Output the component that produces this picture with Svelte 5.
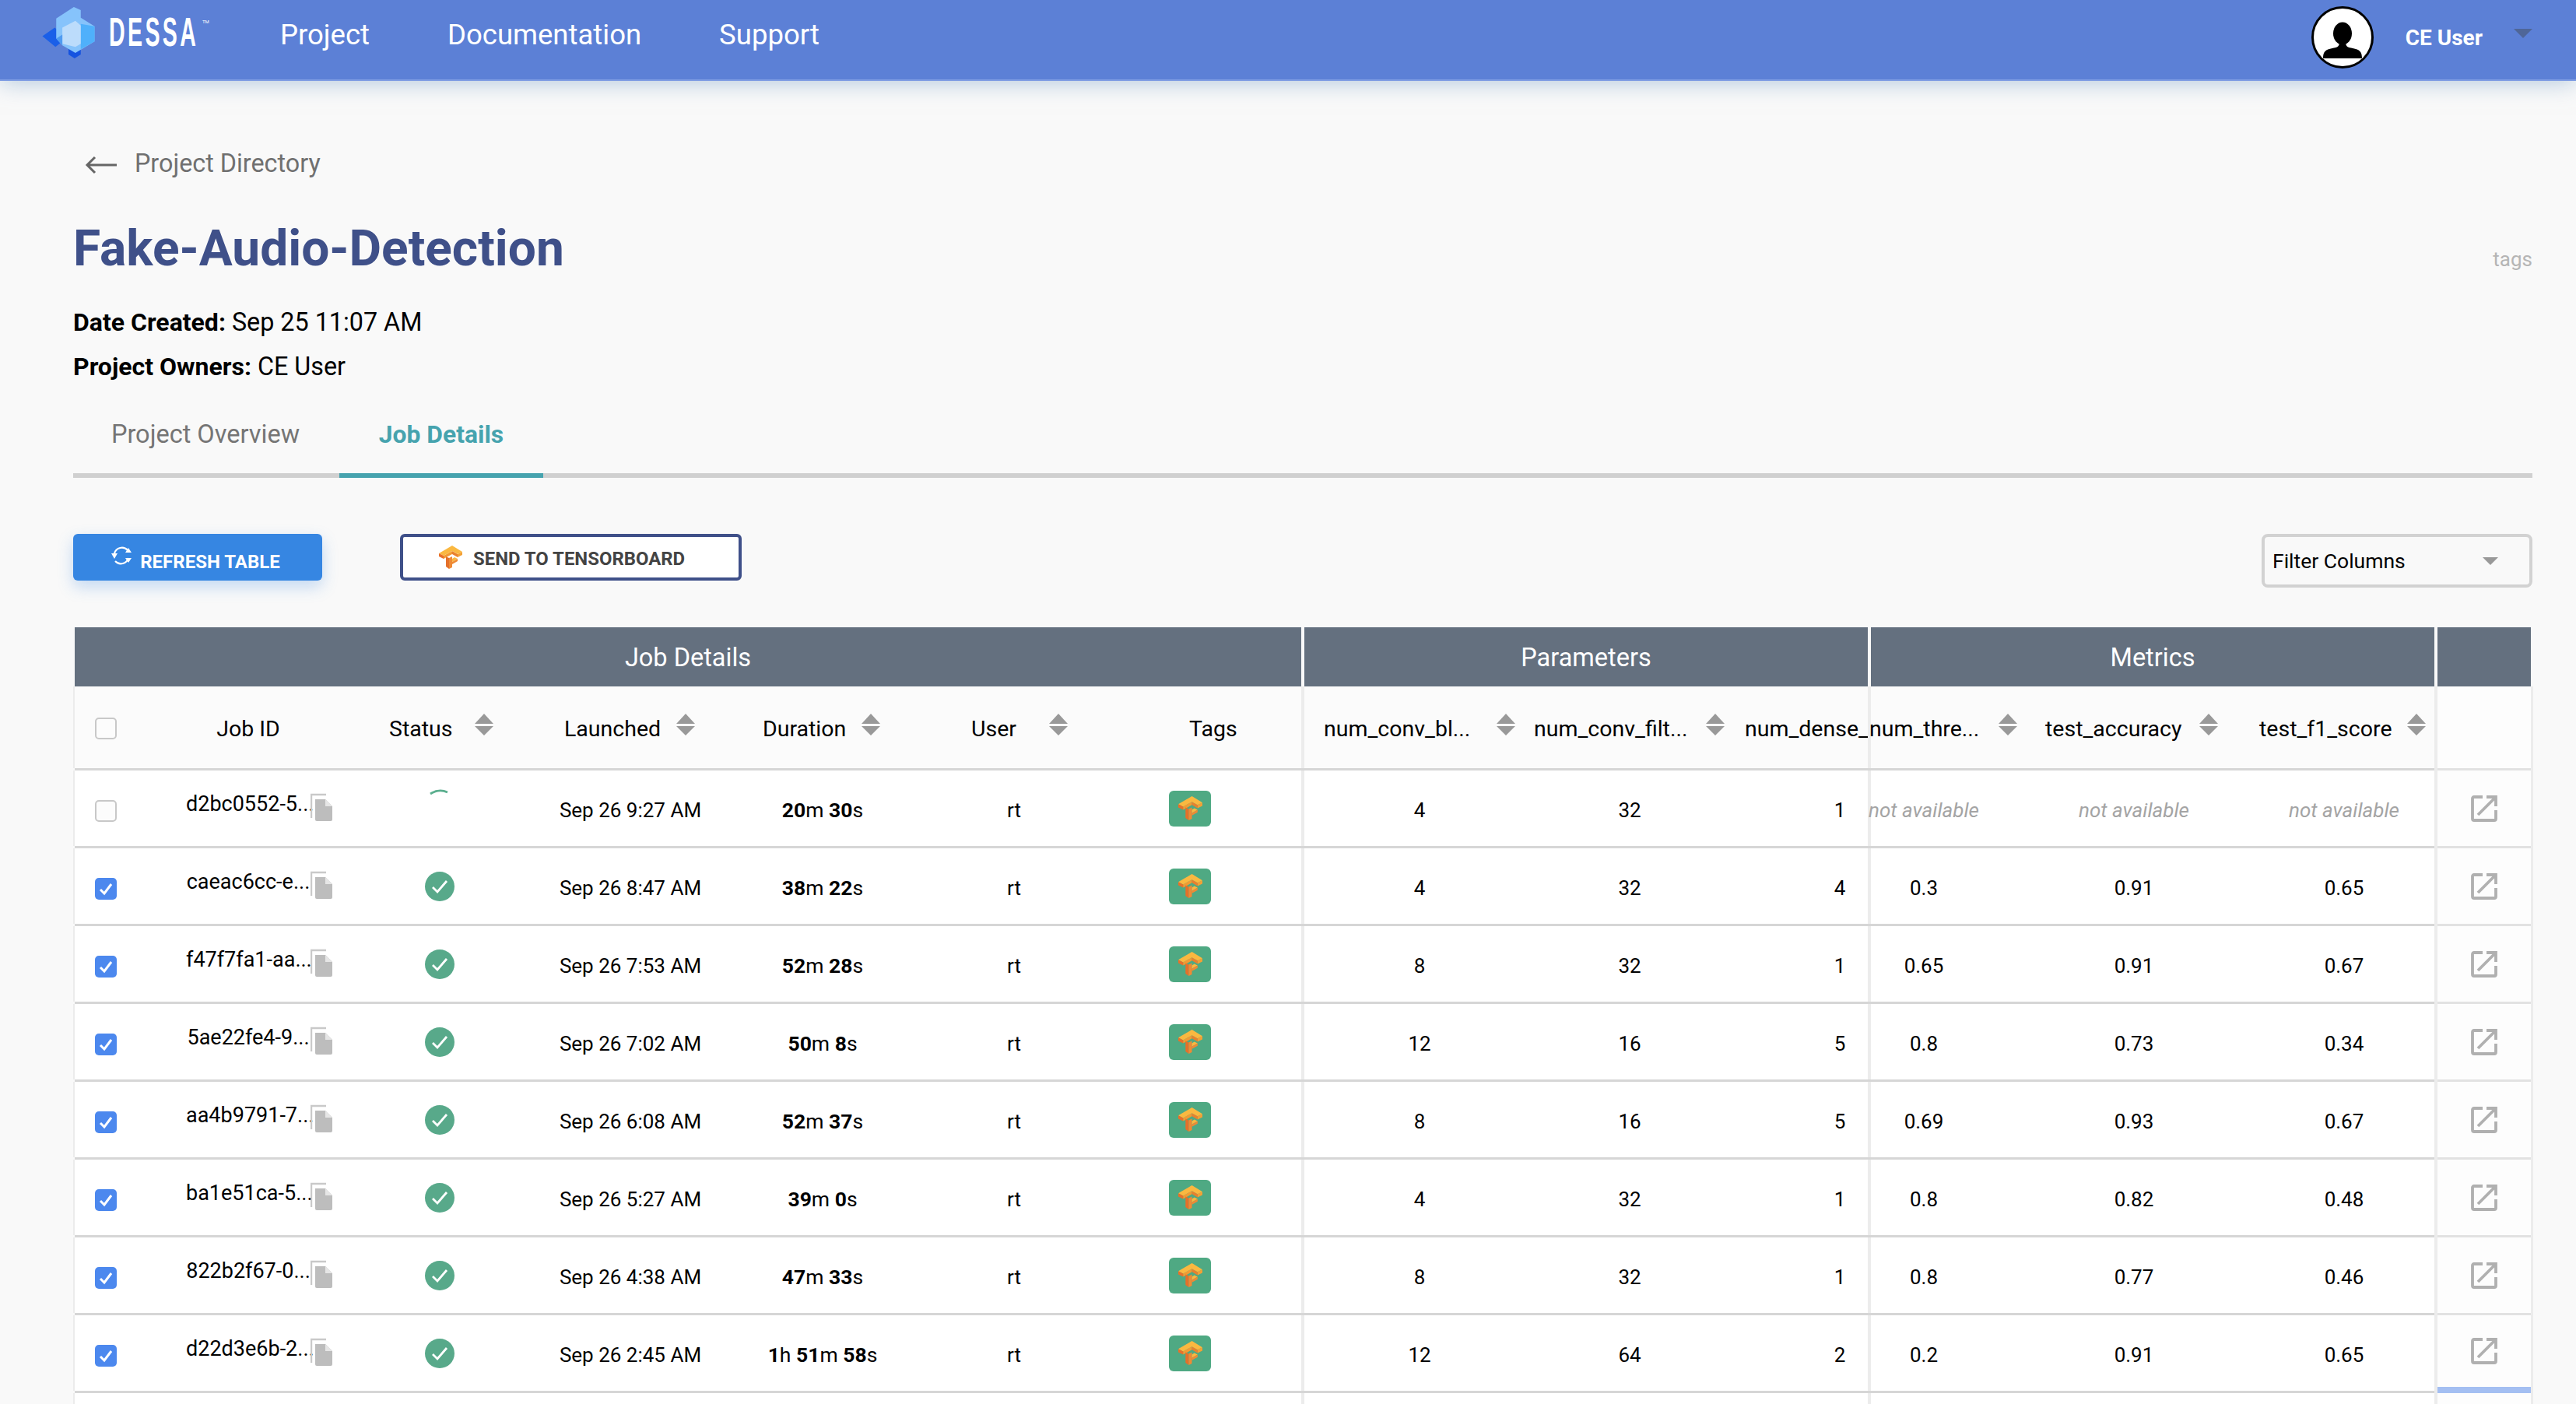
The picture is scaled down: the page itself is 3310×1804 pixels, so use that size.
<script>
  const rows = [
    { id: 'd2bc0552-5...', run: true, launched: 'Sep 26 9:27 AM', dur: [['20','m'],['30','s']], p: [4, 32, 1], m: null },
    { id: 'caeac6cc-e...', launched: 'Sep 26 8:47 AM', dur: [['38','m'],['22','s']], p: [4, 32, 4], m: ['0.3', '0.91', '0.65'] },
    { id: 'f47f7fa1-aa...', launched: 'Sep 26 7:53 AM', dur: [['52','m'],['28','s']], p: [8, 32, 1], m: ['0.65', '0.91', '0.67'] },
    { id: '5ae22fe4-9...', launched: 'Sep 26 7:02 AM', dur: [['50','m'],['8','s']], p: [12, 16, 5], m: ['0.8', '0.73', '0.34'] },
    { id: 'aa4b9791-7...', launched: 'Sep 26 6:08 AM', dur: [['52','m'],['37','s']], p: [8, 16, 5], m: ['0.69', '0.93', '0.67'] },
    { id: 'ba1e51ca-5...', launched: 'Sep 26 5:27 AM', dur: [['39','m'],['0','s']], p: [4, 32, 1], m: ['0.8', '0.82', '0.48'] },
    { id: '822b2f67-0...', launched: 'Sep 26 4:38 AM', dur: [['47','m'],['33','s']], p: [8, 32, 1], m: ['0.8', '0.77', '0.46'] },
    { id: 'd22d3e6b-2...', launched: 'Sep 26 2:45 AM', dur: [['1','h'],['51','m'],['58','s']], p: [12, 64, 2], m: ['0.2', '0.91', '0.65'] }
  ];
</script>

{#snippet sort()}
  <svg class="sort" viewBox="0 0 24 28" aria-hidden="true"><path d="M12 0 24 13H0z" fill="#999"/><path d="M0 16h24L12 28z" fill="#999"/></svg>
{/snippet}

{#snippet tf(cls)}
  <svg class={cls} viewBox="0 0 30 30" aria-hidden="true">
    <path d="M6 13 17 7 17 11 6 17z" fill="#f29a33"/>
    <path d="M24 11 30 8 30 12 24 15z" fill="#f3a035"/>
    <path d="M17 7 24 11 24 15 17 11z" fill="#e8802e"/>
    <path d="M0 10 17 0 30 8 24 11 17 7 6 13z" fill="#fab840"/>
    <path d="M0 10 6 13 6 17 0 14z" fill="#e8702a"/>
    <path d="M9 14 13 16 13 30 9 27z" fill="#e4702a"/>
    <path d="M13 16 17 14 17 28 13 30z" fill="#ee8a35"/>
    <path d="M17 17 20 15 24 17 17 21z" fill="#fab840"/>
    <path d="M17 21 24 17 24 20 17 24z" fill="#ee8a35"/>
  </svg>
{/snippet}

{#snippet openIcon()}
  <svg class="open" viewBox="0 0 34 34" aria-hidden="true">
    <path d="M15 2H4Q2 2 2 4V30Q2 32 4 32H30Q32 32 32 30V19" fill="none" stroke="#b0b0b0" stroke-width="3.800"/>
    <path d="M9 25 31 3M20 2H32V14" fill="none" stroke="#b0b0b0" stroke-width="3.800"/>
  </svg>
{/snippet}

<div class="page">
  <header class="nav">
    <div class="logo">
      <svg class="mark" viewBox="0 0 68 67" aria-hidden="true">
        <path d="M0 38 16 27 26 35 26 45 17 52z" fill="#1a5fe8"/>
        <path d="M34 55 43 50 50 55 50 62 42 67 34 62z" fill="#1553e0"/>
        <path d="M18 15 41 0 50 4 50 14 68 25 68 45 43 60 26 50 18 41z" fill="#86c3fb"/>
        <path d="M50 22 68 25 68 45 50 55z" fill="#4fb0fb"/>
        <path d="M26 27 43 18 50 24 50 48 43 52 26 48z" fill="#bcdcfb"/>
        <path d="M18 41 26 36 26 50z" fill="#4f9bf1"/>
      </svg>
      <span class="wordmark">DESSA</span><span class="tm">TM</span>
    </div>
    <nav class="links"><span>Project</span><span>Documentation</span><span>Support</span></nav>
    <div class="user">
      <svg class="avatar" viewBox="0 0 80 80" aria-hidden="true">
        <circle cx="40" cy="40" r="38.500" fill="#fff" stroke="#000" stroke-width="3"/>
        <ellipse cx="40" cy="35" rx="12" ry="14.500" fill="#000"/>
        <path d="M15 67C15 58 18 56 27 54 33 53 35 52 36 48H44C45 52 47 53 53 54 62 56 65 58 65 67z" fill="#000"/>
      </svg>
      <span class="uname">CE User</span>
      <span class="caret"></span>
    </div>
  </header>

  <main class="content">
    <div class="back">
      <svg viewBox="0 0 42 24" aria-hidden="true"><path d="M41 12H3M13 2 3 12 13 22" fill="none" stroke="#666" stroke-width="3"/></svg>
      <span>Project Directory</span>
    </div>
    <div class="titlebar">
      <h1>Fake-Audio-Detection</h1>
      <span class="tags">tags</span>
    </div>
    <p class="meta"><b>Date Created:</b> Sep 25 11:07 AM</p>
    <p class="meta"><b>Project Owners:</b> CE User</p>
    <div class="tabs">
      <div class="tab">Project Overview</div>
      <div class="tab active">Job Details</div>
    </div>
    <div class="tools">
      <button class="refresh">
        <svg viewBox="0 0 28 28" aria-hidden="true"><path d="M5 11A10 10 0 0 1 22 7M23 17A10 10 0 0 1 6 21" fill="none" stroke="#fff" stroke-width="2.200"/><path d="M19 10 27 10 23 4zM1 11 9 11 5 18zM19 17 27 17 23 23z" fill="#fff"/></svg>
        <span>REFRESH TABLE</span>
      </button>
      <button class="send">{@render tf('tficon')} <span>SEND TO TENSORBOARD</span></button>
      <div class="filter"><span>Filter Columns</span><i></i></div>
    </div>

    <section class="table">
      <div class="band">
        <div class="g jobs">Job Details</div>
        <div class="g params">Parameters</div>
        <div class="g metrics">Metrics</div>
        <div class="g act"></div>
      </div>
      <div class="row head">
        <div class="jobs cols">
          <div class="c chk"><span class="box"></span></div>
          <div class="c id">Job ID</div>
          <div class="c h st">Status {@render sort()}</div>
          <div class="c h la">Launched {@render sort()}</div>
          <div class="c h du">Duration {@render sort()}</div>
          <div class="c h us">User {@render sort()}</div>
          <div class="c tg">Tags</div>
        </div>
        <div class="params cols">
          <div class="c h pa p1"><span>num_conv_bl...</span>{@render sort()}</div>
          <div class="c h pa p2"><span>num_conv_filt...</span>{@render sort()}</div>
          <div class="c h clip"><span>num_dense_</span></div>
        </div>
        <div class="metrics cols">
          <div class="c h mh m1"><span>num_thre...</span>{@render sort()}</div>
          <div class="c h mh m2"><span>test_accuracy</span>{@render sort()}</div>
          <div class="c h mh m3"><span>test_f1_score</span>{@render sort()}</div>
        </div>
        <div class="act"></div>
      </div>
      {#each rows as r, i}
        <div class="row body">
          <div class="jobs cols">
            <div class="c chk"><span class="box" class:on={!r.run}>{#if !r.run}<svg viewBox="0 0 28 28" aria-hidden="true"><path d="M7 15 12 20 21 8" fill="none" stroke="#fff" stroke-width="3"/></svg>{/if}</span></div>
            <div class="c id cell">
              <span class="jid">{r.id}</span>
              <svg class="copy" viewBox="0 0 29 36" aria-hidden="true"><path d="M1 32V2H20" fill="none" stroke="#c9c9c9" stroke-width="2.400"/><path d="M6 8H19L28 17V34Q28 36 26 36H8Q6 36 6 34z" fill="#bdbdbd"/><path d="M19 8V17H28z" fill="#e6e6e6"/></svg>
            </div>
            <div class="c cell stat">
              {#if r.run}
                <svg class="spin" viewBox="0 0 38 38" aria-hidden="true"><path d="M7 8Q18 1 29 6" fill="none" stroke="#5aae8e" stroke-width="2.800"/></svg>
              {:else}
                <svg class="ok" viewBox="0 0 38 38" aria-hidden="true"><circle cx="19" cy="19" r="19" fill="#58a98a"/><path d="M10 20 16 26 28 12" fill="none" stroke="#fff" stroke-width="2.800"/></svg>
              {/if}
            </div>
            <div class="c cell la2">{r.launched}</div>
            <div class="c cell du2">{#each r.dur as d, k}<b>{d[0]}</b>{d[1]}{k < r.dur.length - 1 ? ' ' : ''}{/each}</div>
            <div class="c cell us2">rt</div>
            <div class="c cell tg2"><span class="chip">{@render tf('tfchip')}</span></div>
          </div>
          <div class="params cols">
            {#each r.p as v}
              <div class="c cell pa">{v}</div>
            {/each}
          </div>
          <div class="metrics cols">
            {#each [0, 1, 2] as k}
              <div class="c cell me" class:na={!r.m}>{r.m ? r.m[k] : 'not available'}</div>
            {/each}
          </div>
          <div class="act" class:lastact={i === rows.length - 1}>{@render openIcon()}</div>
        </div>
      {/each}
      <div class="row body tail">
        <div class="jobs"></div><div class="params"></div><div class="metrics"></div><div class="act"></div>
      </div>
    </section>
  </main>
</div>

<style>
  :global(body) { margin: 0; background: #f9f9f9; }
  .page { width: 3310px; height: 1804px; overflow: hidden; font-family: Roboto, "Liberation Sans", sans-serif; color: #000; background: #f9f9f9; }

  .nav { height: 102px; background: #5c80d6; border-bottom: 2px solid #7f9de3; display: flex; align-items: center; box-shadow: 0 2px 28px rgba(120,160,200,.55); position: relative; }
  .logo { display: flex; align-items: center; width: 360px; padding-left: 54px; box-sizing: border-box; height: 100%; }
  .mark { width: 68px; height: 66px; margin-top: -18px; flex: none; }
  .wordmark { font-family: "Liberation Sans", sans-serif; font-weight: 700; color: #fff; font-size: 51px; margin: -19px -92px 0 18px; letter-spacing: 6px; display: block; transform: scaleX(.56); transform-origin: left; width: 208px; flex: none; white-space: nowrap; }
  .tm { color: #fff; font-size: 6px; margin: -48px 0 0 4px; }
  .links { display: flex; gap: 100px; color: #fff; font-size: 36.500px; margin-top: -14px; }
  .user { margin-left: auto; display: flex; align-items: center; padding-right: 56px; margin-top: -6px; }
  .avatar { width: 80px; height: 80px; }
  .uname { color: #fff; font-size: 28px; font-weight: 700; margin-left: 41px; }
  .caret { width: 0; height: 0; border: 12px solid transparent; border-top: 12px solid #4f6698; border-bottom: 0; margin-left: 40px; margin-top: -10px; }

  .content { padding: 0 56px 0 94px; }
  .back { display: flex; align-items: center; height: 40px; margin-top: 86px; font-size: 32.300px; color: #707070; padding-left: 15px; }
  .back svg { width: 42px; height: 24px; margin-right: 22px; margin-top: 4px; }
  .titlebar { display: flex; justify-content: space-between; align-items: center; margin-top: 50px; height: 80px; }
  h1 { margin: 0; font-size: 64px; font-weight: 700; color: #3f5089; line-height: 80px; }
  .tags { font-size: 26px; color: #b5b5b5; margin-top: 26px; }
  .meta { margin: 0; font-size: 32.300px; line-height: 57px; height: 57px; }
  .titlebar + .meta { margin-top: 26px; }
  .meta b { font-weight: 700; font-size: 32px; }
  .tabs { display: flex; border-bottom: 6px solid #d0d0d0; margin-top: 8px; height: 100px; }
  .tab { display: flex; align-items: center; justify-content: center; white-space: nowrap; font-size: 32.500px; color: #757575; height: 100px; box-sizing: border-box; }
  .tab:first-child { width: 342px; padding-right: 2px; }
  .tab.active { width: 262px; color: #46a3ae; font-weight: 700; font-size: 31.800px; border-bottom: 6px solid #46a3ae; height: 106px; }

  .tools { display: flex; align-items: flex-start; margin-top: 72px; height: 120px; }
  button { font-family: inherit; height: 60px; border-radius: 6px; display: flex; align-items: center; padding: 0; font-weight: 700; }
  .refresh { width: 320px; background: #3686e2; color: #fff; border: 0; font-size: 24px; justify-content: center; box-shadow: 0 8px 20px rgba(54,134,226,.28); gap: 10px; padding-right: 6px; }
  .refresh span { margin-top: 11px; }
  .refresh svg { width: 28px; height: 28px; margin-top: -4px; }
  .send { margin-left: 100px; width: 439px; background: #fff; color: #444; border: 4px solid #3f5089; font-size: 23.900px; padding-left: 46px; box-sizing: border-box; gap: 14px; }
  .send span { margin-top: 3px; }
  .tficon { width: 30px; height: 30px; }
  .filter { margin-left: auto; width: 348px; height: 69px; border: 4px solid #d2d2d2; border-radius: 8px; box-sizing: border-box; display: flex; align-items: center; justify-content: space-between; padding: 0 40px 0 10px; font-size: 26.500px; background: #f9f9f9; }
  .filter i { width: 0; height: 0; border: 10px solid transparent; border-top: 10px solid #999; border-bottom: 0; }

  .table { width: 3160px; padding-left: 2px; box-sizing: border-box; }
  .band { display: flex; height: 76px; color: #fff; font-size: 32.500px; }
  .band .g { background: #64707f; display: flex; align-items: center; justify-content: center; box-sizing: border-box; padding-top: 2px; }
  .jobs { width: 1576px; flex: none; box-sizing: border-box; }
  .params { width: 724px; margin-left: 4px; flex: none; box-sizing: border-box; }
  .metrics { width: 724px; margin-left: 4px; flex: none; box-sizing: border-box; }
  .act { width: 120px; margin-left: 4px; flex: none; box-sizing: border-box; }
  .row { display: flex; box-sizing: border-box; }
  .head { height: 108px; background: #fbfbfb; border-bottom: 3px solid #d6d6d6; }
  .head .cols { padding-top: 3px; }
  .body { height: 100px; background: #fff; border-bottom: 3px solid #d6d6d6; }
  .row > div { box-shadow: -4px 0 0 #ececec; }
  .row > .jobs { box-shadow: -2px 0 0 #ececec; }
  .row > .act { box-shadow: -4px 0 0 #ececec, 3px 0 0 #ececec; background: #fdfdfd; margin-bottom: -3px; border-bottom: 3px solid #e2e2e2; display: flex; align-items: center; justify-content: center; }
  .lastact { border-bottom: 8px solid #a4bff2 !important; }
  .tail { border: 0; }
  .cols { display: flex; align-items: center; }
  .c { flex: none; box-sizing: border-box; white-space: nowrap; font-size: 26px; }
  .h, .id:not(.cell), .tg { font-size: 28.500px; }
  .id:not(.cell) { padding-right: 4px; }
  .chk { width: 102px; display: flex; justify-content: center; margin-left: -11px; margin-right: 11px; }
  .body .chk { padding-top: 6px; }
  .box { width: 28px; height: 28px; border: 2px solid #c8c8c8; border-radius: 5px; box-sizing: border-box; background: #fcfcfc; display: block; }
  .box.on { background: #4c88ee; border: 0; }
  .box svg { width: 28px; height: 28px; display: block; }
  .id { width: 246px; text-align: center; }
  .h { display: flex; align-items: center; }
  .sort { width: 24px; height: 28px; flex: none; margin-top: -11px; }
  .st { width: 246px; padding-left: 56px; gap: 28px; }
  .la { width: 246px; padding-left: 35px; gap: 20px; }
  .du { width: 246px; padding-left: 44px; gap: 20px; }
  .us { width: 230px; padding-left: 66px; gap: 42px; }
  .tg { width: 246px; padding-left: 116px; }
  .cell { display: flex; align-items: center; justify-content: center; }
  .id.cell { justify-content: flex-start; padding-left: 41px; font-size: 27px; }
  .jid { width: 160px; margin-top: -11px; }
  .copy { width: 29px; height: 36px; margin-top: -4px; }
  .stat { width: 246px; padding-right: 4px; }
  .ok { width: 38px; height: 38px; }
  .spin { width: 38px; height: 38px; margin-top: -16px; }
  .la2 { width: 246px; padding: 4px 6px 0 0; }
  .du2 { width: 246px; padding: 4px 4px 0 0; white-space: pre; font-size: 26.500px; }
  .du2 b { font-weight: 700; }
  .us2 { width: 246px; padding: 4px 4px 0 0; }
  .tg2 { width: 206px; justify-content: flex-start; padding-left: 74px; }
  .chip { width: 54px; height: 46px; background: #4fa983; border-radius: 6px; display: flex; align-items: center; justify-content: center; }
  .tfchip { width: 31px; height: 31px; }
  .pa { width: 270px; }
  .params.cols { padding-left: 13px; }
  .h.pa { padding-left: 12px; }
  .p1 { gap: 34px; }
  .p2 { gap: 24px; }
  .clip { overflow: hidden; width: 158px; margin-left: 13px; display: block; }
  .params .cell { padding-top: 4px; }
  .me { width: 270px; }
  .metrics .cell { padding-top: 4px; }
  .metrics .cell:first-child { margin-left: -67px; }
  .mh { gap: 21px; }
  .m1 { width: 226px; margin-left: -2px; gap: 25px; }
  .m2 { width: 275px; gap: 23px; }
  .m3 { width: 230px; gap: 19px; }
  .na { color: #a4a4a4; font-style: italic; }
  .open { width: 34px; height: 34px; }
</style>
